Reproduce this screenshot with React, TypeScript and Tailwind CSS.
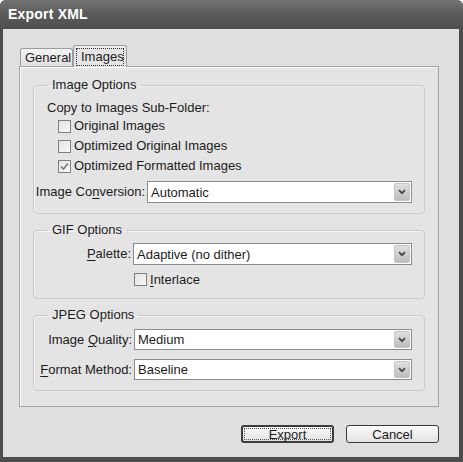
import React from "react";

const FONT = "font-['Liberation_Sans',Arial,sans-serif]";

function Checkbox({ checked = false }: { checked?: boolean }) {
  return (
    <span className="flex h-[13px] w-[13px] shrink-0 items-center justify-center border border-[#7f7f7f] bg-gradient-to-br from-[#e2e2e2] to-[#f8f8f8]">
      {checked && (
        <svg width="9" height="9" viewBox="0 0 9 9">
          <path d="M1 4.5 L3.5 7 L8 1.5" fill="none" stroke="#7a7a7a" strokeWidth="1.6" />
        </svg>
      )}
    </span>
  );
}

function Select({ value, width, height = 22 }: { value: string; width: string; height?: number }) {
  return (
    <div
      className={`flex items-stretch border border-[#8c8c8c] bg-white p-[1px] ${width} ${height === 22 ? "h-[22px]" : "h-[21px]"}`}
    >
      <span className="flex flex-1 items-center pl-[2px] leading-none">{value}</span>
      <span className="flex w-[16px] items-center justify-center rounded-[2px] border border-[#c4c4c4] bg-gradient-to-b from-[#e0e0e0] to-[#bdbdbd]">
        <svg width="8" height="6" viewBox="0 0 8 6">
          <path d="M1 1.2 L4 4.2 L7 1.2" fill="none" stroke="#444" strokeWidth="1.7" />
        </svg>
      </span>
    </div>
  );
}

function Group({ title, className, children }: { title: string; className: string; children: React.ReactNode }) {
  return (
    <fieldset className={`rounded-[4px] border border-[#cacaca] shadow-[inset_1px_1px_0_#f2f2f2] ${className}`}>
      <legend className="ml-[14px] px-[4px] leading-[16px]">{title}</legend>
      {children}
    </fieldset>
  );
}

export default function App() {
  return (
    <div className={`${FONT} flex h-[462px] w-[463px] flex-col overflow-hidden rounded-t-[6px] bg-[#4c4c4c] text-[13px] text-[#1c1c1c]`}>
      {/* title bar */}
      <div className="flex h-[29px] items-center bg-gradient-to-b from-[#747474] via-[#5a5a5a] to-[#4f4f4f] pl-[8px]">
        <span className="text-[14px] font-bold tracking-[0.2px] text-white">Export XML</span>
      </div>

      {/* body */}
      <div className="mb-[5px] ml-[3px] mr-[4px] flex flex-1 flex-col bg-[#dfdfdf] px-[16px] pt-[16px]">
        {/* tabs */}
        <div className="relative z-10 flex h-[21px] items-end pl-[1px]">
          <div className="flex h-[18px] w-[53px] items-center rounded-t-[3px] border border-b-0 border-[#9c9c9c] bg-gradient-to-b from-[#f4f4f4] to-[#e0e0e0] pl-[4px]">
            General
          </div>
          <div className="-mb-[1px] flex h-[22px] w-[54px] items-center rounded-t-[3px] border border-b-0 border-[#9c9c9c] bg-[#e4e4e4] px-[2px] pt-[1px] shadow-[inset_0_2px_0_#f0f0f0]">
            <span className="flex h-[18px] w-full items-center border border-dotted border-[#333] pl-[4px]">Images</span>
          </div>
        </div>

        {/* tab page */}
        <div className="flex h-[341px] w-[420px] flex-col border border-[#a4a4a4] bg-[#e4e4e4] px-[13px] shadow-[inset_1px_1px_0_#fafafa]">
          <Group title="Image Options" className="mt-[10px] h-[137px] w-[392px] pt-[7px]">
            <div className="ml-[13px] h-[16px] leading-[16px]">Copy to Images Sub-Folder:</div>
            <div className="ml-[24px] flex flex-col">
              <label className="flex h-[20px] items-center gap-[3px]">
                <Checkbox />
                Original Images
              </label>
              <label className="flex h-[20px] items-center gap-[3px]">
                <Checkbox />
                Optimized Original Images
              </label>
              <label className="flex h-[20px] items-center gap-[3px]">
                <Checkbox checked />
                Optimized Formatted Images
              </label>
            </div>
            <div className="mt-[5px] flex items-center gap-[2px]">
              <span className="w-[111px] text-right">
                Image Co<span className="underline underline-offset-2">n</span>version:
              </span>
              <Select value="Automatic" width="w-[265px]" />
            </div>
          </Group>

          <Group title="GIF Options" className="mt-[8px] h-[77px] w-[392px] pt-[5px]">
            <div className="flex items-center gap-[2px]">
              <span className="w-[97px] text-right">
                <span className="underline underline-offset-2">P</span>alette:
              </span>
              <Select value="Adaptive (no dither)" width="w-[279px]" />
            </div>
            <label className="ml-[100px] mt-[8px] flex h-[13px] items-center gap-[3px]">
              <Checkbox />
              <span>
                <span className="underline underline-offset-2">I</span>nterlace
              </span>
            </label>
          </Group>

          <Group title="JPEG Options" className="mt-[8px] h-[84px] w-[392px] pt-[6px]">
            <div className="flex items-center gap-[2px]">
              <span className="w-[98px] text-right">
                Image <span className="underline underline-offset-2">Q</span>uality:
              </span>
              <Select value="Medium" width="w-[278px]" height={21} />
            </div>
            <div className="mt-[9px] flex items-center gap-[2px]">
              <span className="w-[98px] text-right">
                <span className="underline underline-offset-2">F</span>ormat Method:
              </span>
              <Select value="Baseline" width="w-[278px]" height={21} />
            </div>
          </Group>
        </div>

        {/* buttons */}
        <div className="mt-[18px] flex w-[420px] justify-end gap-[12px]">
          <button className="flex h-[18px] w-[93px] items-center justify-center rounded-[3px] border-2 border-[#3c3c3c] bg-gradient-to-b from-[#fafafa] to-[#e2e2e2] p-[1px]">
            <span className="flex h-full w-full items-center justify-center border border-dotted border-[#555] leading-none">
              Export
            </span>
          </button>
          <button className="flex h-[18px] w-[93px] items-center justify-center rounded-[3px] border border-[#3c3c3c] bg-gradient-to-b from-[#fafafa] to-[#e2e2e2] leading-none">
            Cancel
          </button>
        </div>
      </div>
    </div>
  );
}
